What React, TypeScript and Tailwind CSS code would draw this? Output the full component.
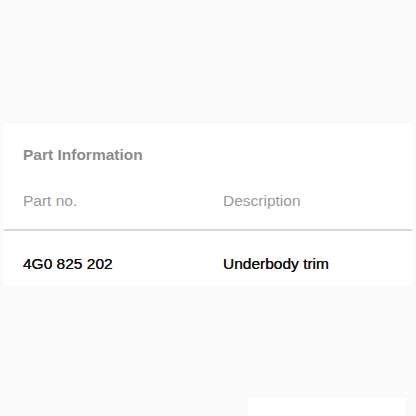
export default function App() {
  return (
    <div
      className="w-[416px] h-[416px] overflow-hidden bg-[#fafafa] pt-[124px] px-[4px]"
      style={{ fontFamily: '"Liberation Sans", Arial, sans-serif' }}
    >
      <div className="bg-white flex flex-col">
        <div className="px-[19px] pt-[22px] leading-[18px] text-[15.5px] font-bold text-[#8c8c8c]">
          Part Information
        </div>
        <div className="flex px-[19px] pt-[28px] pb-[19px] leading-[18px] text-[15.5px] text-[#999999] border-b-2 border-[#d9d9d9]">
          <div className="w-[200px]">Part no.</div>
          <div>Description</div>
        </div>
        <div className="flex px-[19px] pt-[24px] pb-[13px] leading-[18px] text-[15.5px] text-[#111111] [text-shadow:0_0_0.3px_#111]">
          <div className="w-[200px]">4G0 825 202</div>
          <div>Underbody trim</div>
        </div>
      </div>
      <div className="mt-[112px] ml-[244px] w-[157px] h-[20px] bg-white" />
    </div>
  );
}
